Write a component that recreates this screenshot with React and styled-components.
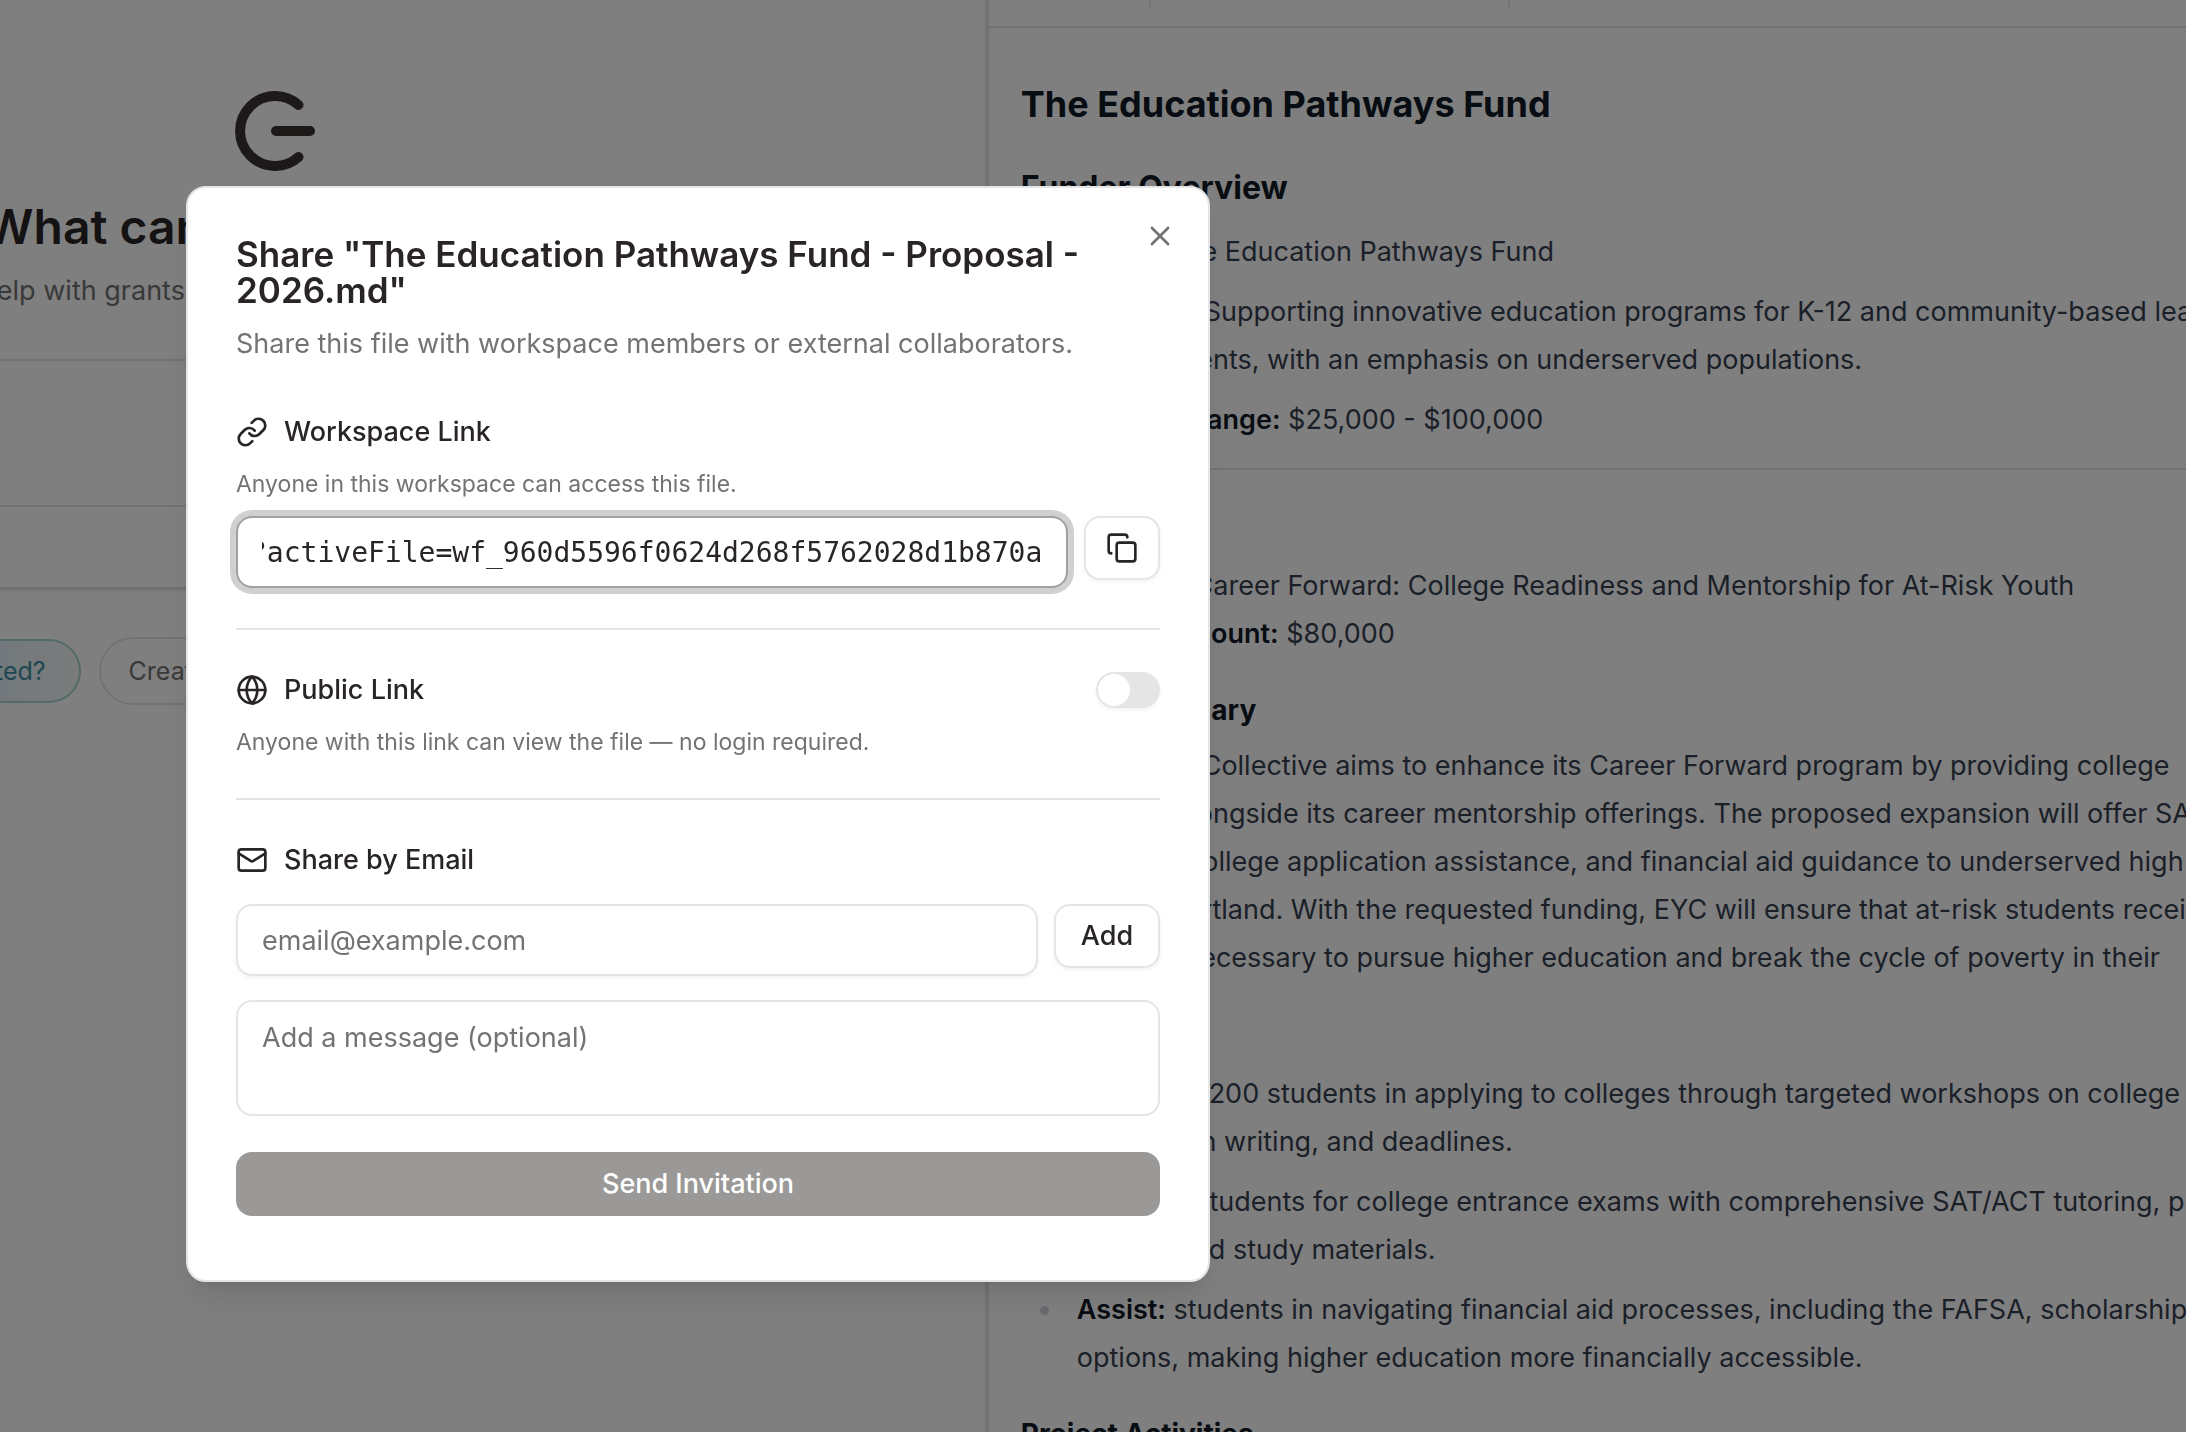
import React, { useEffect, useRef } from "react";
import styled, { createGlobalStyle, css } from "styled-components";
import { Copy, Globe, Link, Mail, X } from "lucide-react";

const GlobalStyle = createGlobalStyle`
  * {
    box-sizing: border-box;
  }
  body {
    margin: 0;
    overflow: hidden;
    background: #ffffff;
    color: #292524;
    font-family: Inter, "Liberation Sans", sans-serif;
    font-size: 27px;
    line-height: 40px;
  }
  h1, h2, h3, p, ul {
    margin: 0;
    padding: 0;
  }
  button, input, textarea {
    font: inherit;
    color: inherit;
  }
`;

const Workspace = styled.div`
  display: grid;
  grid-template-columns: 901fr 1099fr;
  height: 100vh;
  overflow: hidden;
`;

const ChatPane = styled.main`
  min-width: 0;
  overflow: hidden;
  white-space: nowrap;
`;

const Hero = styled.section`
  display: flex;
  flex-direction: column;
  align-items: center;
  width: 550px;
  padding-top: 91px;

  svg {
    display: block;
    flex: none;
  }
`;

const HeroTitle = styled.h1`
  margin-top: 24px;
  font-size: 48px;
  line-height: 64px;
  font-weight: 600;
  color: #292524;
`;

const HeroText = styled.p`
  margin-top: 12px;
  color: #737373;
`;

const Composer = styled.div`
  margin-top: 48px;
  border-top: 2px solid #e5e5e5;
  border-bottom: 2px solid #e0e0e0;
  box-shadow: 0 2px 4px rgba(0, 0, 0, 0.1);
`;

const ComposerBody = styled.div`
  height: 146px;
  border-bottom: 2px solid #e5e5e5;
`;

const ComposerTools = styled.div`
  height: 80px;
`;

const Chips = styled.div`
  display: flex;
  align-items: center;
  gap: 18px;
  margin: 48px 0 0 -5px;
`;

const Chip = styled.button`
  height: 68px;
  padding: 0 28px;
  border: 2px solid #e5e5e5;
  border-radius: 34px;
  background: #ffffff;
  color: #737373;
  font-size: 25px;

  ${(props) =>
    props.$active &&
    css`
      height: 64px;
      padding: 0 33px 0 0;
      border-color: #a9d5d0;
      border-left: none;
      border-radius: 0 32px 32px 0;
      background: linear-gradient(90deg, #e4f0f8, #f6faf9);
      color: #3e8fa0;
    `}
`;

const DocPane = styled.article`
  min-width: 0;
  overflow: hidden;
  border-left: 4px solid #e5e5e5;
`;

const DocToolbar = styled.header`
  display: flex;
  height: 28px;
  border-bottom: 2px solid #e5e5e5;
`;

const ToolGroup = styled.div`
  width: ${(props) => props.$width}px;
  height: 7px;
  border-right: 2px solid #e5e5e5;
`;

const Doc = styled.div`
  padding: 52px 0 0 32px;
  color: #374151;
  line-height: 48px;
  white-space: nowrap;

  p + p {
    margin-top: 12px;
  }
  strong {
    color: #111827;
    font-weight: 600;
  }
`;

const DocTitle = styled.h1`
  margin-bottom: 40px;
  color: #111827;
  font-size: 36px;
  line-height: 48px;
`;

const DocHeading = styled.h2`
  margin-bottom: 20px;
  color: #111827;
  font-size: 32px;
  line-height: 40px;
`;

const DocSubheading = styled.h3`
  margin: 32px 0 12px;
  color: #111827;
  font-size: 28px;
  line-height: 40px;
`;

const DocRule = styled.hr`
  height: 2px;
  margin: 24px 0 32px;
  border: none;
  background: #e5e5e5;
`;

const DocList = styled.ul`
  display: flex;
  flex-direction: column;
  gap: 12px;
  padding-top: 4px;
  list-style: none;
`;

const DocItem = styled.li`
  display: flex;

  &::before {
    content: "";
    flex: none;
    width: 9px;
    height: 9px;
    margin: 20px 28px 0 19px;
    border-radius: 50%;
    background: #d1d5db;
  }
`;

const Overlay = styled.div`
  position: fixed;
  inset: 0;
  padding: 186px;
  background: rgba(0, 0, 0, 0.5);
`;

const Dialog = styled.div`
  position: relative;
  max-width: 1024px;
  padding: 48px 48px 64px;
  border: 2px solid #e5e5e5;
  border-radius: 20px;
  background: #ffffff;
  box-shadow: 0 20px 30px -6px rgba(0, 0, 0, 0.1),
    0 8px 12px -8px rgba(0, 0, 0, 0.1);
`;

const CloseButton = styled.button`
  position: absolute;
  top: 32px;
  right: 32px;
  display: flex;
  padding: 0;
  border: none;
  background: none;
  color: #737373;
`;

const DialogTitle = styled.h2`
  padding-right: 48px;
  font-size: 35px;
  line-height: 36px;
  font-weight: 600;
`;

const DialogText = styled.p`
  margin: 16px 0 48px;
  color: #737373;
`;

const Section = styled.section`
  & + & {
    margin-top: 40px;
    padding-top: 40px;
    border-top: 2px solid #e5e5e5;
  }
`;

const SectionHead = styled.div`
  display: flex;
  align-items: center;
  gap: 16px;
`;

const SectionTitle = styled.h3`
  flex: 1;
  font-size: 27px;
  line-height: 40px;
  font-weight: 500;
`;

const Hint = styled.p`
  margin-top: 16px;
  color: #737373;
  font-size: 23px;
  line-height: 32px;
`;

const FieldRow = styled.div`
  display: flex;
  align-items: flex-start;
  gap: 16px;
  margin-top: ${(props) => props.$top}px;
`;

const field = css`
  border: 2px solid #e5e5e5;
  border-radius: 16px;
  outline: none;
  background: #ffffff;
  box-shadow: 0 2px 4px rgba(0, 0, 0, 0.05);

  &::placeholder {
    color: #737373;
    opacity: 1;
  }
`;

const TextInput = styled.input`
  ${field}
  flex: 1;
  min-width: 0;
  height: 72px;
  padding: 0 24px;
`;

const LinkInput = styled(TextInput)`
  border-color: #a1a1a1;
  box-shadow: 0 0 0 6px #d0d0d0;
  font-family: "DejaVu Sans Mono", monospace;
  font-size: 28px;
`;

const Message = styled.textarea`
  ${field}
  display: block;
  width: 100%;
  height: 116px;
  margin-top: 24px;
  padding: 16px 24px;
  box-shadow: none;
  resize: none;
`;

const OutlineButton = styled.button`
  display: flex;
  align-items: center;
  justify-content: center;
  height: 64px;
  min-width: ${(props) => props.$width}px;
  padding: 0;
  border: 2px solid #e5e5e5;
  border-radius: 16px;
  background: #ffffff;
  box-shadow: 0 2px 4px rgba(0, 0, 0, 0.05);
  font-weight: 500;
`;

const Switch = styled.input`
  appearance: none;
  display: flex;
  width: 64px;
  height: 36px;
  margin: 0;
  padding: 2px;
  border-radius: 18px;
  background: #e5e5e5;
  box-shadow: 0 2px 4px rgba(0, 0, 0, 0.05);

  &::before {
    content: "";
    width: 32px;
    height: 32px;
    border-radius: 50%;
    background: #ffffff;
  }
  &:checked {
    justify-content: flex-end;
    background: #292524;
  }
`;

const SendButton = styled.button`
  width: 100%;
  height: 64px;
  margin-top: 36px;
  border: none;
  border-radius: 16px;
  background: #9b9997;
  color: #ffffff;
  font-weight: 500;
`;

function Logo() {
  return (
    <svg
      width="80"
      height="80"
      viewBox="0 0 80 80"
      fill="none"
      stroke="#3b3333"
      strokeWidth="10"
      strokeLinecap="round"
    >
      <path d="M63.500 14A35 35 0 1 0 63.500 66" />
      <path d="M41 40H75" />
    </svg>
  );
}

function ChatArea() {
  return (
    <ChatPane>
      <Hero>
        <Logo />
        <HeroTitle>What can I review today?</HeroTitle>
        <HeroText>
          Get help with grants or proposals, reports, plans today
        </HeroText>
      </Hero>
      <Composer>
        <ComposerBody />
        <ComposerTools />
      </Composer>
      <Chips>
        <Chip $active>ted?</Chip>
        <Chip>Create a proposal</Chip>
      </Chips>
    </ChatPane>
  );
}

function DocumentArea() {
  return (
    <DocPane>
      <DocToolbar>
        <ToolGroup $width={162} />
        <ToolGroup $width={359} />
      </DocToolbar>
      <Doc>
        <DocTitle>The Education Pathways Fund</DocTitle>
        <DocHeading>Funder Overview</DocHeading>
        <p>
          <strong>Institution:</strong> The Education Pathways Fund
        </p>
        <p>
          <strong>Giving Areas:</strong> Supporting innovative education
          programs for K-12 and community-based learning
          <br />
          and rural students, with an emphasis on underserved populations.
        </p>
        <p>
          <strong>Grant Award Range:</strong> $25,000 - $100,000
        </p>
        <DocRule />
        <DocHeading>Project</DocHeading>
        <p>
          <strong>Project Title:</strong> Career Forward: College Readiness and
          Mentorship for At-Risk Youth
          <br />
          <strong>Requested Amount:</strong> $80,000
        </p>
        <DocSubheading>Project Summary</DocSubheading>
        <p>
          Elevate Youth Collective aims to enhance its Career Forward program by
          providing college
          <br />
          preparation alongside its career mentorship offerings. The proposed
          expansion will offer SAT/ACT
          <br />
          test classes, college application assistance, and financial aid
          guidance to underserved high
          <br />
          students in Portland. With the requested funding, EYC will ensure that
          at-risk students receive
          <br />
          the services necessary to pursue higher education and break the cycle
          of poverty in their
        </p>
        <DocSubheading>Objectives</DocSubheading>
        <DocList>
          <DocItem>
            <div>
              <strong>Advance:</strong> 200 students in applying to colleges
              through targeted workshops on college
              <br />
              application writing, and deadlines.
            </div>
          </DocItem>
          <DocItem>
            <div>
              <strong>Prepare:</strong> students for college entrance exams with
              comprehensive SAT/ACT tutoring, practice
              <br />
              guides, and study materials.
            </div>
          </DocItem>
          <DocItem>
            <div>
              <strong>Assist:</strong> students in navigating financial aid
              processes, including the FAFSA, scholarships
              <br />
              options, making higher education more financially accessible.
            </div>
          </DocItem>
        </DocList>
        <DocSubheading>Project Activities</DocSubheading>
      </Doc>
    </DocPane>
  );
}

function ShareDialog() {
  const linkRef = useRef(null);

  // keep the end of the link in view
  useEffect(() => {
    linkRef.current.scrollLeft = linkRef.current.scrollWidth;
  }, []);

  return (
    <Overlay>
      <Dialog role="dialog" aria-labelledby="share-title">
        <DialogTitle id="share-title">
          Share "The Education Pathways Fund - Proposal - 2026.md"
        </DialogTitle>
        <DialogText>
          Share this file with workspace members or external collaborators.
        </DialogText>

        <Section>
          <SectionHead>
            <Link size={32} />
            <SectionTitle id="workspace-link">Workspace Link</SectionTitle>
          </SectionHead>
          <Hint>Anyone in this workspace can access this file.</Hint>
          <FieldRow $top={16}>
            <LinkInput
              ref={linkRef}
              aria-labelledby="workspace-link"
              readOnly
              value="?activeFile=wf_960d5596f0624d268f5762028d1b870a"
            />
            <OutlineButton $width={76} aria-label="Copy link">
              <Copy size={32} />
            </OutlineButton>
          </FieldRow>
        </Section>

        <Section>
          <SectionHead>
            <Globe size={32} />
            <SectionTitle id="public-link">Public Link</SectionTitle>
            <Switch
              type="checkbox"
              role="switch"
              aria-labelledby="public-link"
            />
          </SectionHead>
          <Hint>
            Anyone with this link can view the file — no login required.
          </Hint>
        </Section>

        <Section>
          <SectionHead>
            <Mail size={32} />
            <SectionTitle id="share-email">Share by Email</SectionTitle>
          </SectionHead>
          <FieldRow $top={24}>
            <TextInput
              type="email"
              aria-labelledby="share-email"
              placeholder="email@example.com"
            />
            <OutlineButton $width={106}>Add</OutlineButton>
          </FieldRow>
          <Message
            aria-label="Message"
            placeholder="Add a message (optional)"
          />
          <SendButton>Send Invitation</SendButton>
        </Section>

        <CloseButton aria-label="Close">
          <X size={32} />
        </CloseButton>
      </Dialog>
    </Overlay>
  );
}

export default function App() {
  return (
    <>
      <GlobalStyle />
      <Workspace>
        <ChatArea />
        <DocumentArea />
      </Workspace>
      <ShareDialog />
    </>
  );
}
